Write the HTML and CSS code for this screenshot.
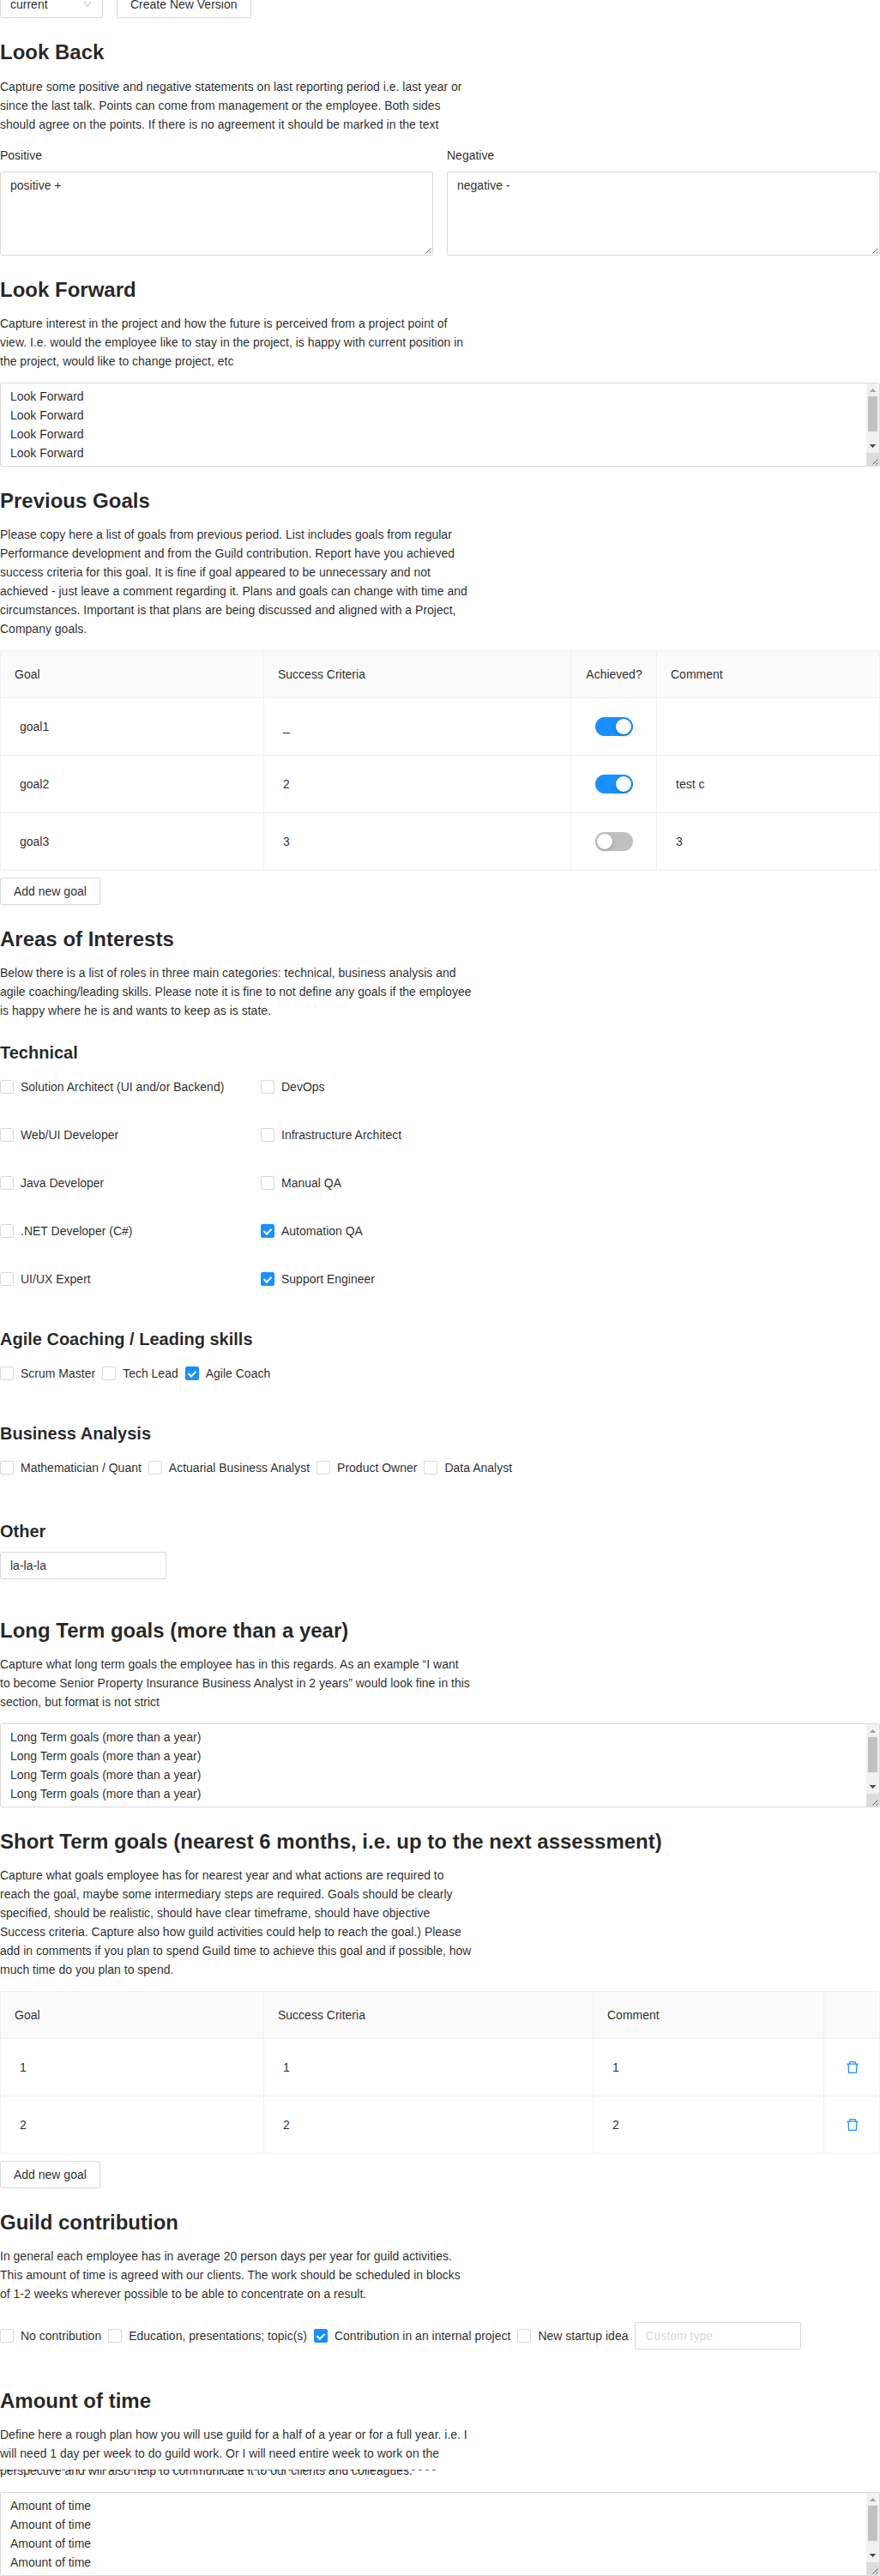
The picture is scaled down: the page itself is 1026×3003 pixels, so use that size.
FILE: index.html
```html
<!DOCTYPE html>
<html lang="en">
<head>
<meta charset="utf-8">
<title>Assessment</title>
<link rel="stylesheet" href="styles.css">
</head>
<body>
<svg class="defs" width="0" height="0">
  <symbol id="grip" viewBox="0 0 15 15"><path d="M7.5 13.5l6-6M11.5 13.5l2-2" fill="none" stroke="#555" stroke-width="1"/></symbol>
  <symbol id="trash" viewBox="0 0 1024 1024"><path fill="currentColor" d="M360 184h-8c4.400 0 8-3.600 8-8v8h304v-8c0 4.400 3.600 8 8 8h-8v72h72v-80c0-35.300-28.700-64-64-64H352c-35.300 0-64 28.700-64 64v80h72v-72zm504 72H160c-17.700 0-32 14.300-32 32v32c0 4.400 3.600 8 8 8h60.400l24.700 523c1.600 34.100 29.800 61 63.900 61h454c34.200 0 62.300-26.800 63.900-61l24.700-523H888c4.400 0 8-3.600 8-8v-32c0-17.700-14.300-32-32-32zM731.300 840H292.700l-24.200-512h487l-24.200 512z"/></symbol>
  <symbol id="down" viewBox="0 0 1024 1024"><path fill="currentColor" d="M884 256h-75c-5.100 0-9.900 2.500-12.900 6.600L512 654.200 227.900 262.600c-3-4.100-7.800-6.600-12.900-6.600h-75c-6.500 0-10.300 7.400-6.500 12.700l352.600 486.100c12.800 17.600 39 17.600 51.700 0l352.600-486.100c3.900-5.300.1-12.700-6.400-12.700z"/></symbol>
  <symbol id="bar" viewBox="0 0 15 96"><path fill="#f1f1f1" d="M0 0h15v81H0z"/><path fill="#dcdcdc" d="M0 81h15v15H0z"/><path fill="#c1c1c1" d="M2 15h11v41H2z"/><path fill="#a3a3a3" d="M7 6h1v1h1v1h1v1h1v1H4V9h1V8h1V7h1z"/><path fill="#505050" d="M4 71h7v1h-1v1H9v1H8v1H7v-1H6v-1H5v-1H4z"/></symbol>
</svg>
<main class="page">
  <div class="toolbar">
    <div class="select">current<svg class="select-arrow"><use href="#down"/></svg></div>
    <button class="btn">Create New Version</button>
  </div>

  <h2>Look Back</h2>
  <p>Capture some positive and negative statements on last reporting period i.e. last year or since the last talk. Points can come from management or the employee. Both sides should agree on the points. If there is no agreement it should be marked in the text</p>
  <div class="pair">
    <label>Positive<span class="area"><textarea>positive +</textarea><svg class="grip"><use href="#grip"/></svg></span></label>
    <label>Negative<span class="area"><textarea>negative -</textarea><svg class="grip"><use href="#grip"/></svg></span></label>
  </div>

  <h2>Look Forward</h2>
  <p>Capture interest in the project and how the future is perceived from a project point of view. I.e. would the employee like to stay in the project, is happy with current position in the project, would like to change project, etc</p>
  <div class="area"><textarea>Look Forward
Look Forward
Look Forward
Look Forward</textarea><svg class="bar"><use href="#bar"/></svg><svg class="grip"><use href="#grip"/></svg></div>

  <h2>Previous Goals</h2>
  <p>Please copy here a list of goals from previous period. List includes goals from regular Performance development and from the Guild contribution. Report have you achieved success criteria for this goal. It is fine if goal appeared to be unnecessary and not achieved - just leave a comment regarding it. Plans and goals can change with time and circumstances. Important is that plans are being discussed and aligned with a Project, Company goals.</p>
  <div class="table previous">
    <div class="row head"><div>Goal</div><div>Success Criteria</div><div class="center">Achieved?</div><div>Comment</div></div>
    <div class="row"><div>goal1</div><div>_</div><div class="center"><span class="switch on"></span></div><div></div></div>
    <div class="row"><div>goal2</div><div>2</div><div class="center"><span class="switch on"></span></div><div>test c</div></div>
    <div class="row"><div>goal3</div><div>3</div><div class="center"><span class="switch"></span></div><div>3</div></div>
  </div>
  <button class="btn add">Add new goal</button>

  <h2 class="areas">Areas of Interests</h2>
  <p>Below there is a list of roles in three main categories: technical, business analysis and agile coaching/leading skills. Please note it is fine to not define any goals if the employee is happy where he is and wants to keep as is state.</p>

  <h3 class="technical">Technical</h3>
  <div class="roles">
    <label class="check"><i></i>Solution Architect (UI and/or Backend)</label><label class="check"><i></i>DevOps</label>
    <label class="check"><i></i>Web/UI Developer</label><label class="check"><i></i>Infrastructure Architect</label>
    <label class="check"><i></i>Java Developer</label><label class="check"><i></i>Manual QA</label>
    <label class="check"><i></i>.NET Developer (C#)</label><label class="check checked"><i></i>Automation QA</label>
    <label class="check"><i></i>UI/UX Expert</label><label class="check checked"><i></i>Support Engineer</label>
  </div>

  <h3>Agile Coaching / Leading skills</h3>
  <div class="checks"><label class="check"><i></i>Scrum Master</label><label class="check"><i></i>Tech Lead</label><label class="check checked"><i></i>Agile Coach</label></div>

  <h3>Business Analysis</h3>
  <div class="checks"><label class="check"><i></i>Mathematician / Quant</label><label class="check"><i></i>Actuarial Business Analyst</label><label class="check"><i></i>Product Owner</label><label class="check"><i></i>Data Analyst</label></div>

  <h3 class="other">Other</h3>
  <input class="input" value="la-la-la">

  <h2 class="long">Long Term goals (more than a year)</h2>
  <p>Capture what long term goals the employee has in this regards. As an example “I want<br>to become Senior Property Insurance Business Analyst in 2 years” would look fine in this section, but format is not strict</p>
  <div class="area"><textarea>Long Term goals (more than a year)
Long Term goals (more than a year)
Long Term goals (more than a year)
Long Term goals (more than a year)</textarea><svg class="bar"><use href="#bar"/></svg><svg class="grip"><use href="#grip"/></svg></div>

  <h2>Short Term goals (nearest 6 months, i.e. up to the next assessment)</h2>
  <p>Capture what goals employee has for nearest year and what actions are required to reach the goal, maybe some intermediary steps are required. Goals should be clearly specified, should be realistic, should have clear timeframe, should have objective Success criteria. Capture also how guild activities could help to reach the goal.) Please add in comments if you plan to spend Guild time to achieve this goal and if possible, how much time do you plan to spend.</p>
  <div class="table short">
    <div class="row head"><div>Goal</div><div>Success Criteria</div><div>Comment</div><div></div></div>
    <div class="row"><div>1</div><div>1</div><div>1</div><div class="center"><svg class="trash"><use href="#trash"/></svg></div></div>
    <div class="row"><div>2</div><div>2</div><div>2</div><div class="center"><svg class="trash"><use href="#trash"/></svg></div></div>
  </div>
  <button class="btn add">Add new goal</button>

  <h2 class="contribution">Guild contribution</h2>
  <p>In general each employee has in average 20 person days per year for guild activities. This amount of time is agreed with our clients. The work should be scheduled in blocks of 1-2 weeks wherever possible to be able to concentrate on a result.</p>
  <div class="checks guild"><label class="check"><i></i>No contribution</label><label class="check"><i></i>Education, presentations; topic(s)</label><label class="check checked"><i></i>Contribution in an internal project</label><label class="check"><i></i>New startup idea</label><input class="input" placeholder="Custom type"></div>

  <h2 class="amount">Amount of time</h2>
  <p class="plan">Define here a rough plan how you will use guild for a half of a year or for a full year. i.e. I will need 1 day per week to do guild work. Or I will need entire week to work on the</p>
  <div class="clipped"><span>perspective and will also help to communicate it to our clients and colleagues.</span></div>
  <div class="area"><textarea>Amount of time
Amount of time
Amount of time
Amount of time</textarea><svg class="bar"><use href="#bar"/></svg><svg class="grip"><use href="#grip"/></svg></div>
</main>
</body>
</html>
```
FILE: styles.css
```css
*, *::before, *::after { box-sizing: border-box; }
html, body { margin: 0; }
body {
  height: 3003px;
  overflow: hidden;
  background: #fff;
  color: rgba(0, 0, 0, .85);
  font: 14px/22px "Liberation Sans", Arial, sans-serif;
}
.defs { position: absolute; }
.page { display: flow-root; width: 1026px; }
button, input, textarea { font: inherit; color: inherit; }

.toolbar { display: flex; gap: 16px; margin-top: -10.8px; }
.select {
  display: flex; align-items: center; justify-content: space-between;
  width: 120px; height: 32px; padding: 0 11px;
  border: 1px solid #d9d9d9; border-radius: 2px;
}
.select-arrow { width: 12px; height: 12px; color: rgba(0, 0, 0, .25); }
.btn {
  display: block; height: 32px; padding: 0 15px;
  border: 1px solid #d9d9d9; border-radius: 2px; background: #fff;
  box-shadow: 0 2px 0 rgba(0, 0, 0, .016);
}
.btn.add { margin-top: 8px; }

h2 { margin: 24px 0 12px; font-size: 24px; line-height: 32.4px; font-weight: 700; }
h3 { margin: 16px 0 10px; font-size: 20px; line-height: 28px; font-weight: 700; }
h2.areas, h2.contribution { margin-top: 23.6px; }
h3.technical { margin-top: 24px; }
h3.other { margin-top: 20px; }
h2.long { margin-top: 43.2px; }
h2.amount { margin-top: 43.4px; }
p { max-width: 551px; margin: 0 0 14px; }

.pair { display: grid; grid-template-columns: 1fr 1fr; column-gap: 16px; }
.area { display: block; position: relative; height: 98px; }
.pair .area { margin-top: 8px; }
textarea {
  display: block; width: 100%; height: 98px; margin: 0; padding: 4px 11px;
  border: 1px solid #d9d9d9; border-radius: 2px; background: #fff;
  resize: none; overflow: hidden; outline: 0;
}
.grip, .bar { position: absolute; right: 1px; bottom: 1px; width: 15px; height: 15px; }
.bar { height: 96px; shape-rendering: crispEdges; }
.input {
  display: block; width: 194px; height: 32px; margin: 0; padding: 4px 11px;
  border: 1px solid #d9d9d9; border-radius: 2px; background: #fff; outline: 0;
}
.input::placeholder { color: #d9d9d9; opacity: 1; }

.table { border: solid #f0f0f0; border-width: 1px 0 0 1px; border-radius: 2px 2px 0 0; }
.row { display: grid; height: 67px; }
.previous .row { grid-template-columns: 307px 358px 100px 260px; }
.short .row { grid-template-columns: 307px 384px 269px 65px; }
.row > div {
  display: flex; align-items: center; padding: 0 22px;
  border: solid #f0f0f0; border-width: 0 1px 1px 0;
}
.row.head { height: 55px; background: #fafafa; }
.row.head > div { padding: 0 16px; }
.row > .center, .row.head > .center { justify-content: center; padding: 0 0 0 1px; }
.switch {
  display: flex; width: 44px; height: 22px; padding: 2px;
  border-radius: 11px; background: #bfbfbf;
}
.switch::before {
  content: ""; width: 18px; height: 18px; border-radius: 9px; background: #fff;
  box-shadow: 0 2px 4px rgba(0, 35, 11, .2);
}
.switch.on { justify-content: flex-end; background: #1890ff; }
.trash { width: 18px; height: 18px; color: #1890ff; }

.roles { display: grid; grid-template-columns: 304px auto; grid-auto-rows: 56px; }
.checks { display: flex; height: 56px; }
.check { display: flex; align-items: center; height: 32px; padding-right: 8px; white-space: nowrap; }
.check i {
  display: flex; align-items: center; justify-content: center; flex: none;
  width: 16px; height: 16px; margin-right: 8px;
  border: 1px solid #d9d9d9; border-radius: 2px; background: #fff;
}
.checked i { border-color: #1890ff; background: #1890ff; }
.checked i::after {
  content: ""; width: 5.7px; height: 9.1px; margin: -1.3px 0 0 .3px;
  border: solid #fff; border-width: 0 2px 2px 0; transform: rotate(45deg);
}
.guild { height: 32px; margin-top: 22px; }

.plan { margin: 0; }
/* The last line of the description shows only its lower half, under a worn edge. */
.clipped { height: 34.2px; padding-top: 7.8px; }
.clipped span {
  display: flex; align-items: flex-end; width: 509px; height: 12px; overflow: hidden;
  background: repeating-linear-gradient(90deg, #666 0 4px, transparent 4px 8px) 0 0 / 100% 1px no-repeat;
}
```
